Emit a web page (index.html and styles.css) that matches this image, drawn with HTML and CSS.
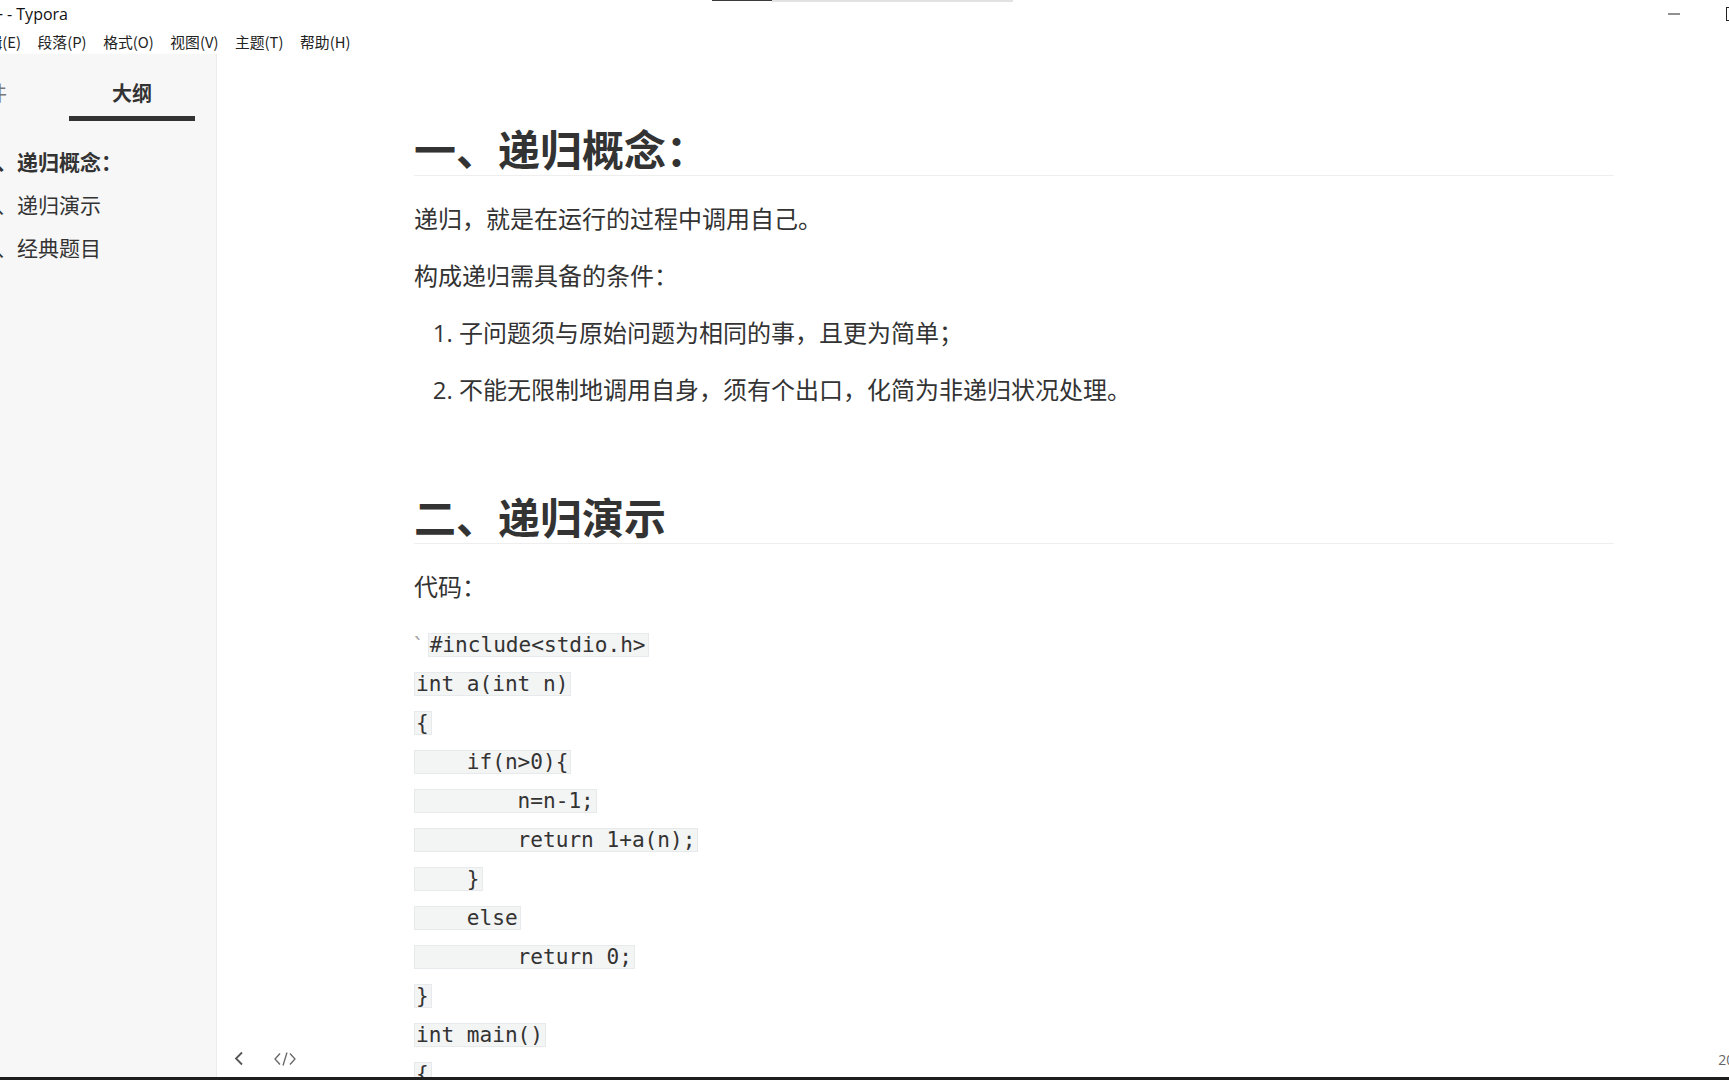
FILE: index.html
```html
<!DOCTYPE html>
<html lang="zh-CN">
<head>
<meta charset="utf-8">
<title>递归 - Typora</title>
<link rel="stylesheet" href="styles.css">
</head>
<body>
<div class="app">
  <header class="titlebar">
    <span class="title-cut">一</span>
    <span class="title">- Typora</span>
    <div class="loadbar"><span class="load-dark"></span><span class="load-light"></span></div>
    <div class="winctl">
      <span class="wbtn"><svg width="12" height="2" viewBox="0 0 12 2"><rect x="0" y="0.5" width="12" height="1" fill="#222"/></svg></span>
      <span class="wbtn"><svg width="12" height="14" viewBox="0 0 12 14"><rect x="0.5" y="0.5" width="11" height="13" fill="none" stroke="#222" stroke-width="1"/></svg></span>
      <span class="wbtn"></span>
    </div>
  </header>
  <nav class="menubar">
    <span>文件(F)</span>
    <span>编辑(E)</span>
    <span>段落(P)</span>
    <span>格式(O)</span>
    <span>视图(V)</span>
    <span>主题(T)</span>
    <span>帮助(H)</span>
  </nav>
  <div class="workspace">
    <aside class="sidebar">
      <div class="tabs">
        <div class="tab">文件</div>
        <div class="tab active">大纲</div>
      </div>
      <ul class="outline">
        <li class="active">一、递归概念：</li>
        <li>二、递归演示</li>
        <li>三、经典题目</li>
      </ul>
    </aside>
    <main class="main">
      <article class="write">
        <h2 class="heading">一、递归概念：</h2>
        <p>递归，就是在运行的过程中调用自己。</p>
        <p>构成递归需具备的条件：</p>
        <ol>
          <li>子问题须与原始问题为相同的事，且更为简单；</li>
          <li>不能无限制地调用自身，须有个出口，化简为非递归状况处理。</li>
        </ol>
        <h2 class="heading second">二、递归演示</h2>
        <p>代码：</p>
        <p class="code-para"><span class="md-mark">`</span><code class="first">#include&lt;stdio.h&gt;</code><br><code>int a(int n)</code><br><code>{</code><br><code>    if(n&gt;0){</code><br><code>        n=n-1;</code><br><code>        return 1+a(n);</code><br><code>    }</code><br><code>    else</code><br><code>        return 0;</code><br><code>}</code><br><code>int main()</code><br><code>{</code><br><code>    printf("%d",a(5));</code><br><code>}</code></p>
      </article>
      <div class="statusbar">
        <span class="sicon back"><svg width="10" height="15" viewBox="0 0 10 15"><path d="M8 1.5 L2 7.5 L8 13.5" fill="none" stroke="#555" stroke-width="1.8"/></svg></span>
        <span class="sicon code"><svg width="22" height="14" viewBox="0 0 22 14"><path d="M6 1.5 L1 7 L6 12.5 M13 0.5 L9 13.5 M16 1.5 L21 7 L16 12.5" fill="none" stroke="#666" stroke-width="1.3"/></svg></span>
        <span class="count">2039 词</span>
      </div>
    </main>
  </div>
</div>
<div class="taskbar"></div>
</body>
</html>
```
FILE: styles.css
```css
html, body {
  margin: 0;
  padding: 0;
  height: 100%;
  overflow: hidden;
  background: #ffffff;
}

body {
  font-family: "Open Sans", "Noto Sans CJK SC", sans-serif;
  color: #333333;
}

.app {
  width: 1819px;
  height: 1077px;
  display: flex;
  flex-direction: column;
}

/* title bar */
.titlebar {
  height: 28px;
  display: flex;
  align-items: center;
  position: relative;
  font-size: 16px;
  color: #111;
  flex: none;
}

.title-cut {
  display: inline-block;
  width: 3px;
  overflow: hidden;
  direction: rtl;
  white-space: nowrap;
  font-family: "Noto Sans CJK SC", sans-serif;
}

.title {
  margin-left: 4px;
  white-space: nowrap;
}

.loadbar {
  position: absolute;
  top: 0;
  left: 712px;
  display: flex;
  align-items: flex-start;
}

.load-dark {
  width: 60px;
  height: 1px;
  background: #3a3a3a;
}

.load-light {
  width: 241px;
  height: 2px;
  background: #e2e2e2;
}

.winctl {
  margin-left: auto;
  display: flex;
  height: 28px;
}

.wbtn {
  width: 58px;
  height: 28px;
  display: flex;
  align-items: center;
  justify-content: center;
}

/* menu */
.menubar {
  height: 26px;
  box-sizing: border-box;
  padding-top: 1px;
  display: flex;
  align-items: center;
  margin-left: -100px;
  font-family: "Noto Sans CJK SC", sans-serif;
  font-size: 14.8px;
  color: #222;
  flex: none;
  white-space: nowrap;
}

.menubar span {
  padding: 0 8.3px;
}

/* workspace */
.workspace {
  flex: 1;
  display: flex;
  min-height: 0;
}

.sidebar {
  width: 301px;
  margin-left: -85px;
  flex: none;
  background: #f7f7f7;
  border-right: 1px solid #ececec;
  box-shadow: 1px 0 2px rgba(0, 0, 0, 0.03);
  font-family: "Noto Sans CJK SC", sans-serif;
}

.tabs {
  display: flex;
  gap: 19px;
  padding-left: 9px;
}

.tab {
  width: 126px;
  text-align: center;
  font-size: 20px;
  line-height: 26px;
  padding-top: 26px;
  padding-bottom: 10px;
  border-bottom: 5px solid transparent;
  color: #777;
}

.tab.active {
  font-weight: 700;
  color: #333;
  border-bottom-color: #333;
}

.outline {
  list-style: none;
  margin: 19px 0 0 0;
  padding: 0 0 0 60px;
}

.outline li {
  font-size: 21px;
  line-height: 26.5px;
  padding: 8px 0;
  color: #333;
  white-space: nowrap;
}

.outline li:nth-child(3) {
  padding-top: 9px;
}

.outline li.active {
  font-weight: 700;
}

/* main */
.main {
  flex: 1;
  position: relative;
  overflow: hidden;
  background: #ffffff;
}

.write {
  width: 1200px;
  padding-left: 197px;
  padding-top: 71px;
  font-size: 24px;
  line-height: 38px;
}

.heading {
  font-family: "Open Sans", "Noto Sans CJK SC", sans-serif;
  font-size: 42px;
  font-weight: 700;
  line-height: 50px;
  margin: 0 0 24px 0;
  padding: 0;
  border-bottom: 1px solid #eeeeee;
  color: #333;
}

.heading.second {
  margin-top: 84px;
}

.write p {
  margin: 19px 0;
}

.write ol {
  margin: 19px 0;
  padding-left: 45px;
}

.write li + li {
  margin-top: 19px;
}

.write p.code-para {
  line-height: 39px;
}

.md-mark {
  color: #aaaaaa;
}

.write code {
  display: inline-block;
  font-family: "DejaVu Sans Mono", "Liberation Mono", monospace;
  font-size: 21.1px;
  line-height: 22px;
  white-space: pre;
  background: #f3f4f4;
  border: 1px solid #e7eaed;
  padding: 0 2px 0 1px;
  vertical-align: 2px;
  color: #333;
}

.write code.first {
  margin-left: 7px;
}

/* status bar overlay */
.statusbar {
  position: absolute;
  left: 0;
  right: 0;
  bottom: 0;
  height: 37px;
  display: flex;
  align-items: center;
  padding-left: 17px;
  padding-right: 51px;
  font-size: 14px;
  color: #666;
}

.sicon {
  display: flex;
  align-items: center;
}

.sicon.code {
  margin-left: 30px;
}

.count {
  margin-left: auto;
  white-space: nowrap;
  font-family: "Open Sans", "Noto Sans CJK SC", sans-serif;
}

.taskbar {
  height: 3px;
  background: #1e1e1e;
}
```
